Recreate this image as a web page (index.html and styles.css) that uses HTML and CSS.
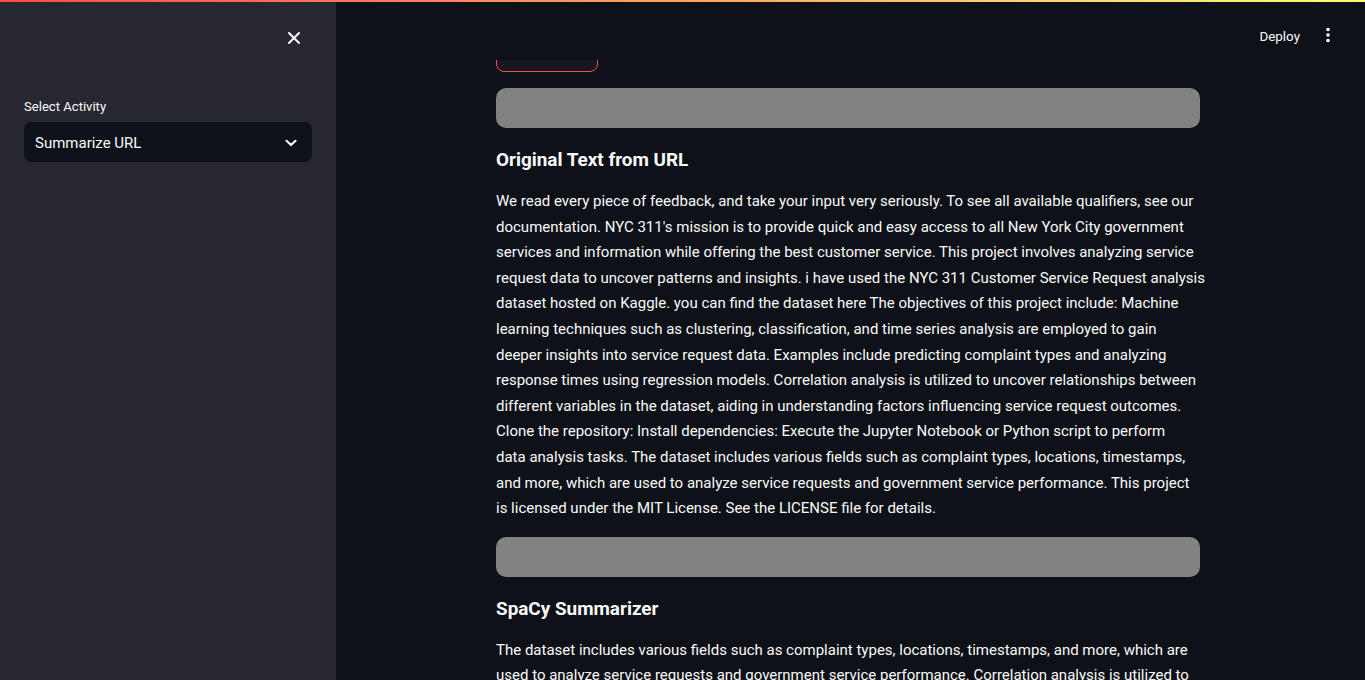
FILE: index.html
```html
<!DOCTYPE html>
<html lang="en">
<head>
<meta charset="utf-8">
<title>Summarize URL</title>
<link rel="stylesheet" href="styles.css">
</head>
<body>
<div class="app">
  <div class="decoration"></div>
  <aside class="sidebar">
    <div class="sidebar-header">
      <button class="close-btn" aria-label="Close sidebar">
        <svg width="14" height="14" viewBox="0 0 14 14"><path d="M2 2 L12 12 M12 2 L2 12" stroke="#fafafa" stroke-width="2" stroke-linecap="round" fill="none"/></svg>
      </button>
    </div>
    <div class="sidebar-content">
      <label class="field-label">Select Activity</label>
      <div class="select">
        <span class="select-value">Summarize URL</span>
        <svg class="chevron" width="12" height="8" viewBox="0 0 12 8"><path d="M1.5 1.8 L6 6 L10.5 1.8" stroke="#fafafa" stroke-width="2.2" fill="none" stroke-linecap="round" stroke-linejoin="round"/></svg>
      </div>
    </div>
  </aside>
  <main class="main">
    <header class="topbar">
      <button class="deploy">Deploy</button>
      <button class="menu-btn" aria-label="Main menu">
        <svg width="6" height="16" viewBox="0 0 6 16"><circle cx="3" cy="2.5" r="1.8" fill="#fafafa"/><circle cx="3" cy="8" r="1.8" fill="#fafafa"/><circle cx="3" cy="13.5" r="1.8" fill="#fafafa"/></svg>
      </button>
    </header>
    <div class="block">
      <button class="st-button">Summarize</button>
      <div class="bar bar-first"></div>
      <h3 class="subheader">Original Text from URL</h3>
      <p class="para para-lines">We read every piece of feedback, and take your input very seriously. To see all available qualifiers, see our<br>
documentation. NYC 311's mission is to provide quick and easy access to all New York City government<br>
services and information while offering the best customer service. This project involves analyzing service<br>
request data to uncover patterns and insights. i have used the NYC 311 Customer Service Request analysis<br>
dataset hosted on Kaggle. you can find the dataset here The objectives of this project include: Machine<br>
learning techniques such as clustering, classification, and time series analysis are employed to gain<br>
deeper insights into service request data. Examples include predicting complaint types and analyzing<br>
response times using regression models. Correlation analysis is utilized to uncover relationships between<br>
different variables in the dataset, aiding in understanding factors influencing service request outcomes.<br>
Clone the repository: Install dependencies: Execute the Jupyter Notebook or Python script to perform<br>
data analysis tasks. The dataset includes various fields such as complaint types, locations, timestamps,<br>
and more, which are used to analyze service requests and government service performance. This project<br>
is licensed under the MIT License. See the LICENSE file for details.</p>
      <div class="bar"></div>
      <h3 class="subheader">SpaCy Summarizer</h3>
      <p class="para">The dataset includes various fields such as complaint types, locations, timestamps, and more, which are used to analyze service requests and government service performance. Correlation analysis is utilized to uncover relationships between different variables in the dataset, aiding in understanding factors influencing service request outcomes.</p>
    </div>
  </main>
</div>
</body>
</html>
```

FILE: styles.css
```css
* { box-sizing: border-box; }
html, body {
  margin: 0;
  padding: 0;
  height: 680px;
  overflow: hidden;
  background: #0e1117;
  color: #fafafa;
  font-family: Roboto, "Liberation Sans", sans-serif;
}
.app {
  position: relative;
  display: flex;
  height: 680px;
  overflow: hidden;
}
.decoration {
  position: absolute;
  top: 0;
  left: 0;
  right: 0;
  height: 2px;
  background: linear-gradient(90deg, #ff4b4b, #fffd80);
  z-index: 10;
}
.sidebar {
  width: 336px;
  flex: 0 0 336px;
  background: #262730;
  height: 680px;
}
.sidebar-header {
  display: flex;
  justify-content: flex-end;
  padding: 24px 28px 0 24px;
  height: 52px;
}
.close-btn {
  width: 28px;
  height: 28px;
  border: none;
  background: transparent;
  padding: 0;
  display: flex;
  align-items: center;
  justify-content: center;
  cursor: pointer;
}
.sidebar-content {
  padding: 45px 24px 0 24px;
}
.field-label {
  display: block;
  font-size: 13.1px;
  line-height: 20px;
  margin-bottom: 5px;
  color: #fafafa;
}
.select {
  height: 40px;
  background: #0e1117;
  border-radius: 8px;
  display: flex;
  align-items: center;
  justify-content: space-between;
  padding: 1px 15px 0 11px;
}
.select-value {
  font-size: 15px;
}
.main {
  position: relative;
  flex: 1;
  height: 680px;
  overflow: hidden;
}
.topbar {
  position: absolute;
  top: 0;
  left: 0;
  right: 0;
  height: 60px;
  background: #0e1117;
  display: flex;
  align-items: center;
  justify-content: flex-end;
  padding: 12px 21px 0 0;
  z-index: 5;
}
.deploy {
  background: transparent;
  border: none;
  color: #fafafa;
  font-family: inherit;
  font-size: 13.4px;
  padding: 4px 12px;
  margin-right: 0;
}
.menu-btn {
  width: 32px;
  height: 32px;
  background: transparent;
  border: none;
  display: flex;
  align-items: center;
  justify-content: center;
  padding: 0;
  margin-top: -2px;
}
.block {
  width: 704px;
  margin-left: 160px;
  padding-top: 32px;
  display: flex;
  flex-direction: column;
  align-items: stretch;
}
.st-button {
  align-self: flex-start;
  width: 102px;
  height: 40px;
  border: 1px solid #ff4b4b;
  border-radius: 8px;
  background: #14171f;
  color: #ff4b4b;
  font-family: inherit;
  font-size: 15px;
}
.bar {
  height: 40px;
  background: #828282;
  border-radius: 10px;
}
.bar-first {
  margin-top: 16px;
}
.subheader {
  margin: 16px 0 0 0;
  font-size: 18.9px;
  font-weight: 700;
  line-height: 32px;
}
.para {
  margin: 13px 0 15px 0;
  font-size: 15px;
  line-height: 25.6px;
}
.para-lines {
  white-space: nowrap;
}
```
